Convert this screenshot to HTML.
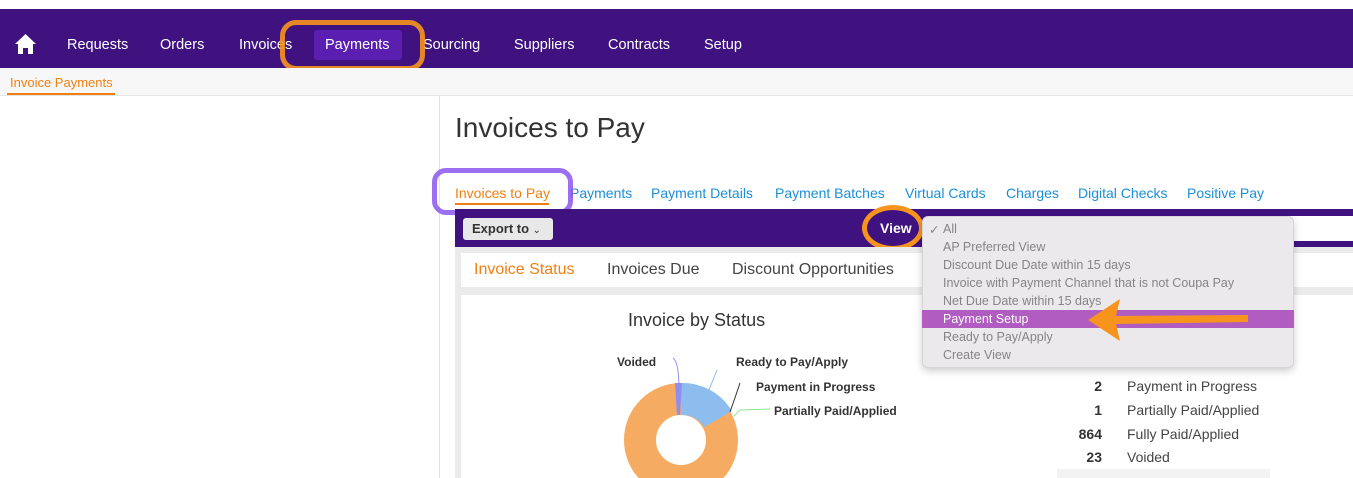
<!DOCTYPE html>
<html><head><meta charset="utf-8"><style>
*{margin:0;padding:0;box-sizing:border-box}
body{width:1353px;height:478px;overflow:hidden;background:#fff;font-family:"Liberation Sans",sans-serif;position:relative}
.a{position:absolute;white-space:nowrap}
.nav{left:0;top:9px;width:1353px;height:59px;background:#3f1280}
.ni{color:#fff;font-size:14.5px;top:37px}
.tab{color:#1a8fd8;font-size:14px;top:185px}
.dd{font-size:12.5px;color:#858585;left:943px}
.lb{font-size:12px;font-weight:bold;color:#333}
.rn{font-size:14px;font-weight:bold;color:#333;text-align:right;width:50px;left:1052px}
.rl{font-size:14px;color:#444;left:1127px}
</style></head><body>
<div class="a nav"></div>
<svg class="a" style="left:14px;top:33px" width="23" height="22" viewBox="0 0 23 22"><path d="M11.5 1 L22 11 H19 V21 H14 V15 H9 V21 H4 V11 H1 Z" fill="#fff"/></svg>
<div class="a" style="left:314px;top:30px;width:88px;height:30px;background:#5a1fb0;border-radius:3px"></div>
<div class="a ni" style="left:67px">Requests</div>
<div class="a ni" style="left:160px">Orders</div>
<div class="a ni" style="left:239px">Invoices</div>
<div class="a ni" style="left:325px">Payments</div>
<div class="a ni" style="left:423px">Sourcing</div>
<div class="a ni" style="left:514px">Suppliers</div>
<div class="a ni" style="left:608px">Contracts</div>
<div class="a ni" style="left:704px">Setup</div>
<div class="a" style="left:280px;top:20px;width:145px;height:51px;border:5px solid #f7941d;border-radius:16px;opacity:.9"></div>
<div class="a" style="left:0;top:68px;width:1353px;height:28px;background:#f7f7f7;border-bottom:1px solid #e5e5e5"></div>
<div class="a" style="left:10px;top:75px;color:#f07f12;font-size:13px">Invoice Payments</div>
<div class="a" style="left:7px;top:93px;width:108px;height:2px;background:#f07f12"></div>
<div class="a" style="left:439px;top:96px;width:1px;height:382px;background:#e3e3e3"></div>
<div class="a" style="left:455px;top:112px;font-size:28px;color:#333">Invoices to Pay</div>
<div class="a tab" style="left:455px;color:#f07f12">Invoices to Pay</div>
<div class="a" style="left:455px;top:203px;width:94px;height:2px;background:#f07f12"></div>
<div class="a tab" style="left:570px">Payments</div>
<div class="a tab" style="left:651px">Payment Details</div>
<div class="a tab" style="left:775px">Payment Batches</div>
<div class="a tab" style="left:905px">Virtual Cards</div>
<div class="a tab" style="left:1006px">Charges</div>
<div class="a tab" style="left:1078px">Digital Checks</div>
<div class="a tab" style="left:1187px">Positive Pay</div>
<div class="a" style="left:432px;top:168px;width:141px;height:47px;border:5px solid #8a55f0;border-radius:14px;opacity:.85"></div>
<div class="a" style="left:455px;top:209px;width:898px;height:38px;background:#3f1280"></div>
<div class="a" style="left:1090px;top:216px;width:263px;height:25px;background:#fff"></div>
<div class="a" style="left:463px;top:218px;width:90px;height:22px;background:#e8e8e8;border-radius:3px;font-size:13px;font-weight:bold;color:#333;padding:3px 9px">Export to <span style="font-weight:normal;font-size:10px">⌄</span></div>
<div class="a" style="left:880px;top:220px;color:#fff;font-weight:bold;font-size:14px">View</div>
<div class="a" style="left:862px;top:205px;width:62px;height:46px;border:5px solid #f7941d;border-radius:50%"></div>
<div class="a" style="left:455px;top:247px;width:898px;height:231px;background:#ebebeb"></div>
<div class="a" style="left:461px;top:253px;width:892px;height:34px;background:#fff"></div>
<div class="a" style="left:474px;top:261px;font-size:16px;color:#f07f12">Invoice Status</div>
<div class="a" style="left:607px;top:261px;font-size:16px;color:#444">Invoices Due</div>
<div class="a" style="left:732px;top:261px;font-size:16px;color:#444">Discount Opportunities</div>
<div class="a" style="left:461px;top:295px;width:892px;height:183px;background:#fff"></div>
<div class="a" style="left:628px;top:310px;font-size:18px;color:#333">Invoice by Status</div>
<svg class="a" style="left:600px;top:350px" width="320" height="128">
<circle cx="81" cy="90" r="41" fill="none" stroke="#f5ac62" stroke-width="32"/>
<path d="M81 49 A41 41 0 0 1 118 69" fill="none" stroke="#8dbcee" stroke-width="32"/>
<path d="M76 49 A41 41 0 0 1 81 49" fill="none" stroke="#8f8df0" stroke-width="32"/>
<path d="M73 8 Q79 12 79 40" fill="none" stroke="#8f8df0"/>
<path d="M117 20 L105 50" fill="none" stroke="#8dbcee"/>
<path d="M140 33 Q136 45 130 62" fill="none" stroke="#333"/>
<path d="M170 59 L140 60 L134 66" fill="none" stroke="#8de88d"/>
</svg>
<div class="a lb" style="left:617px;top:355px">Voided</div>
<div class="a lb" style="left:736px;top:355px">Ready to Pay/Apply</div>
<div class="a lb" style="left:756px;top:380px">Payment in Progress</div>
<div class="a lb" style="left:774px;top:404px">Partially Paid/Applied</div>
<div class="a rn" style="top:378px">2</div><div class="a rl" style="top:378px">Payment in Progress</div>
<div class="a rn" style="top:402px">1</div><div class="a rl" style="top:402px">Partially Paid/Applied</div>
<div class="a rn" style="top:426px">864</div><div class="a rl" style="top:426px">Fully Paid/Applied</div>
<div class="a rn" style="top:449px">23</div><div class="a rl" style="top:449px">Voided</div>
<div class="a" style="left:1057px;top:469px;width:213px;height:9px;background:#f3f3f3"></div>
<div class="a" style="left:922px;top:216px;width:372px;height:152px;background:#ebe9eb;border:1px solid #d5d5d5;border-radius:6px;box-shadow:0 3px 8px rgba(0,0,0,.2)"></div>
<div class="a" style="left:922px;top:310px;width:372px;height:18px;background:#b05cc0"></div>
<div class="a dd" style="left:929px;top:222px">✓</div>
<div class="a dd" style="top:222px">All</div>
<div class="a dd" style="top:240px">AP Preferred View</div>
<div class="a dd" style="top:258px">Discount Due Date within 15 days</div>
<div class="a dd" style="top:276px">Invoice with Payment Channel that is not Coupa Pay</div>
<div class="a dd" style="top:294px">Net Due Date within 15 days</div>
<div class="a dd" style="top:312px;color:#fff">Payment Setup</div>
<div class="a dd" style="top:330px">Ready to Pay/Apply</div>
<div class="a dd" style="top:348px">Create View</div>
<svg class="a" style="left:1080px;top:296px" width="175" height="48"><path d="M40 3 L8 24 L40 45 L36 28 L168 26 L168 19 L36 20 Z" fill="#f7941d"/></svg>
</body></html>
